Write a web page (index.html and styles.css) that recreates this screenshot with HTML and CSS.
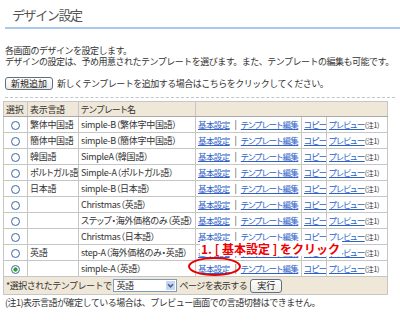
FILE: index.html
```html
<!DOCTYPE html>
<html lang="ja">
<head>
  <meta charset="UTF-8" />
  <title>デザイン設定</title>
  <link rel="stylesheet" href="styles.css">
</head>
<body>

  <!-- Page heading -->
  <h1 class="title">デザイン設定</h1>

  <p class="lead">
    各画面のデザインを設定します。<br>
    デザインの設定は、予め用意されたテンプレートを選びます。また、テンプレートの編集も可能です。
  </p>

  <div class="add-row">
    <button class="btn">新規追加</button>
    <span>新しくテンプレートを追加する場合はこちらをクリックしてください。</span>
  </div>
  <div class="rule"></div>

  <!-- Template list -->
  <div class="table-wrap">
    <table class="tpl">
      <colgroup>
        <col style="width: 24px">
        <col style="width: 51px">
        <col style="width: 117px">
        <col style="width: 106px">
        <col style="width: 25px">
        <col style="width: 61px">
      </colgroup>
      <tr class="head">
        <th>選択</th>
        <th class="lang">表示言語</th>
        <th>テンプレート名</th>
        <th colspan="3"></th>
      </tr>
      <tr>
        <td class="sel"><span class="radio"></span></td>
        <td class="lang">繁体中国語</td>
        <td>simple-B（繁体字中国語）</td>
        <td class="links"><a href="#">基本設定</a><span class="sep">|</span><a href="#">テンプレート編集</a></td>
        <td class="links"><a href="#">コピー</a></td>
        <td class="links"><a href="#">プレビュー</a><span class="note-mark">(注1)</span></td>
      </tr>
      <tr>
        <td class="sel"><span class="radio"></span></td>
        <td class="lang">簡体中国語</td>
        <td>simple-B（簡体字中国語）</td>
        <td class="links"><a href="#">基本設定</a><span class="sep">|</span><a href="#">テンプレート編集</a></td>
        <td class="links"><a href="#">コピー</a></td>
        <td class="links"><a href="#">プレビュー</a><span class="note-mark">(注1)</span></td>
      </tr>
      <tr>
        <td class="sel"><span class="radio"></span></td>
        <td class="lang">韓国語</td>
        <td>SimpleA（韓国語）</td>
        <td class="links"><a href="#">基本設定</a><span class="sep">|</span><a href="#">テンプレート編集</a></td>
        <td class="links"><a href="#">コピー</a></td>
        <td class="links"><a href="#">プレビュー</a><span class="note-mark">(注1)</span></td>
      </tr>
      <tr>
        <td class="sel"><span class="radio"></span></td>
        <td class="lang">ポルトガル語</td>
        <td>Simple-A（ポルトガル語）</td>
        <td class="links"><a href="#">基本設定</a><span class="sep">|</span><a href="#">テンプレート編集</a></td>
        <td class="links"><a href="#">コピー</a></td>
        <td class="links"><a href="#">プレビュー</a><span class="note-mark">(注1)</span></td>
      </tr>
      <tr>
        <td class="sel"><span class="radio"></span></td>
        <td class="lang">日本語</td>
        <td>simple-B（日本語）</td>
        <td class="links"><a href="#">基本設定</a><span class="sep">|</span><a href="#">テンプレート編集</a></td>
        <td class="links"><a href="#">コピー</a></td>
        <td class="links"><a href="#">プレビュー</a><span class="note-mark">(注1)</span></td>
      </tr>
      <tr>
        <td class="sel"><span class="radio"></span></td>
        <td class="lang"></td>
        <td>Christmas（英語）</td>
        <td class="links"><a href="#">基本設定</a><span class="sep">|</span><a href="#">テンプレート編集</a></td>
        <td class="links"><a href="#">コピー</a></td>
        <td class="links"><a href="#">プレビュー</a><span class="note-mark">(注1)</span></td>
      </tr>
      <tr>
        <td class="sel"><span class="radio"></span></td>
        <td class="lang"></td>
        <td>ステップ・海外価格のみ（英語）</td>
        <td class="links"><a href="#">基本設定</a><span class="sep">|</span><a href="#">テンプレート編集</a></td>
        <td class="links"><a href="#">コピー</a></td>
        <td class="links"><a href="#">プレビュー</a><span class="note-mark">(注1)</span></td>
      </tr>
      <tr>
        <td class="sel"><span class="radio"></span></td>
        <td class="lang"></td>
        <td>Christmas（日本語）</td>
        <td class="links"><a href="#">基本設定</a><span class="sep">|</span><a href="#">テンプレート編集</a></td>
        <td class="links"><a href="#">コピー</a></td>
        <td class="links"><a href="#">プレビュー</a><span class="note-mark">(注1)</span></td>
      </tr>
      <tr>
        <td class="sel"><span class="radio"></span></td>
        <td class="lang">英語</td>
        <td>step-A（海外価格のみ・英語）</td>
        <td class="links"><a href="#">基本設定</a><span class="sep">|</span><a href="#">テンプレート編集</a></td>
        <td class="links"><a href="#">コピー</a></td>
        <td class="links"><a href="#">プレビュー</a><span class="note-mark">(注1)</span></td>
      </tr>
      <tr>
        <td class="sel"><span class="radio on"></span></td>
        <td class="lang"></td>
        <td>simple-A（英語）</td>
        <td class="links"><a href="#">基本設定</a><span class="sep">|</span><a href="#">テンプレート編集</a></td>
        <td class="links"><a href="#">コピー</a></td>
        <td class="links"><a href="#">プレビュー</a><span class="note-mark">(注1)</span></td>
      </tr>
      <tr class="foot">
        <td colspan="6">
          <div class="foot-row">
            <span>*選択されたテンプレートで</span>
            <span class="select">
              <span class="select-value">英語</span>
              <span class="select-arrow">
                <svg width="9" height="9" viewBox="0 0 9 9"><path d="M2 3.2 L4.5 5.8 L7 3.2" fill="none" stroke="#4d6185" stroke-width="1.6"/></svg>
              </span>
            </span>
            <span>ページを表示する</span>
            <button class="btn small">実行</button>
          </div>
        </td>
      </tr>
    </table>

    <!-- Annotation -->
    <div class="callout">1. [ 基本設定 ] をクリック</div>
    <div class="ring"></div>
  </div>

  <p class="note">(注1)表示言語が確定している場合は、プレビュー画面での言語切替はできません。</p>

</body>
</html>
```

FILE: styles.css
```css
body {
  margin: 0;
  font-family: "Noto Sans CJK JP", sans-serif;
  font-size: 9px;
  color: #333;
  background: #fff;
}

.title {
  margin: 0 0 0 5px;
  padding: 6px 0 4px 7px;
  font-size: 13px;
  line-height: 17px;
  font-weight: normal;
  letter-spacing: -1.4px;
  color: #555;
  border-bottom: 2px solid #a9c8ea;
}

.lead {
  margin: 16px 0 0 5px;
  line-height: 11px;
  letter-spacing: -0.5px;
}

.add-row {
  display: flex;
  align-items: center;
  gap: 4px;
  margin: 10px 0 0 5px;
  letter-spacing: -0.5px;
}

.btn {
  font-family: inherit;
  font-size: 9px;
  letter-spacing: 0;
  color: #222;
  height: 13px;
  padding: 0 5px;
  line-height: 11px;
  border: 1px solid #5f6f82;
  border-radius: 3px;
  background: linear-gradient(#ffffff, #ecebe5);
}

.rule {
  margin: 7px 5px 0 5px;
  border-top: 1px dashed #c4c4c4;
}

/* Template table */
.table-wrap {
  position: relative;
  margin-top: 3px;
}

.tpl {
  margin-left: 3px;
  width: 384px;
  table-layout: fixed;
  border-collapse: collapse;
  border: 1px solid #9a9a9a;
  font-feature-settings: "palt";
}

.tpl th,
.tpl td {
  border: 1px solid #c6c6c6;
  padding: 0 2px;
  height: 15px;
  line-height: 13px;
  text-align: left;
  font-weight: normal;
  letter-spacing: -0.3px;
  white-space: nowrap;
  overflow: hidden;
}

.tpl .lang {
  padding: 0 0 0 2px;
}

.tpl .head th {
  height: 14px;
  background: #efe7d7;
  border-bottom-color: #a9a9a9;
}

.tpl td.sel {
  text-align: center;
  padding: 0;
}

.radio {
  display: inline-block;
  width: 7px;
  height: 7px;
  border: 1px solid #3f6ea8;
  border-radius: 50%;
  background: radial-gradient(circle, #ffffff 40%, #dfe6ee);
  vertical-align: middle;
}

.radio.on {
  background: radial-gradient(circle, #2f9e2f 0 1.8px, #ffffff 2.4px, #dfe6ee);
}

.tpl td.links {
  padding: 0 0 0 2px;
}

.links a {
  font-size: 8.5px;
  letter-spacing: -0.6px;
  color: #2f62c6;
  text-decoration: underline;
}

.sep {
  margin: 0 4px 0 5px;
  color: #444;
}

.note-mark {
  font-size: 7px;
  color: #333;
}

.tpl .foot td {
  height: 17px;
  background: #efe7d7;
  padding: 0 2px;
  letter-spacing: -0.5px;
  font-feature-settings: normal;
}

.foot-row {
  display: flex;
  align-items: center;
  gap: 2px;
}

.select {
  display: flex;
  width: 62px;
  height: 11px;
  border: 1px solid #7f9db9;
  background: #fff;
}

.select-value {
  flex: 1;
  padding-left: 2px;
  line-height: 11px;
}

.select-arrow {
  width: 9px;
  height: 9px;
  margin: 1px;
  display: flex;
  background: #c6d5f5;
}

.btn.small {
  height: 14px;
  padding: 0 6px;
  margin-left: 1px;
}

/* Red annotation */
.callout {
  position: absolute;
  left: 200px;
  top: 140px;
  padding: 0 2px 0 1px;
  background: #fff;
  color: #ee0000;
  font-size: 12px;
  font-weight: bold;
  line-height: 15px;
}

.ring {
  position: absolute;
  left: 188px;
  top: 156px;
  width: 49px;
  height: 15px;
  border: 2px solid #e60000;
  border-radius: 50%;
}

.note {
  margin: 2px 0 0 5px;
  line-height: 12px;
  letter-spacing: -0.5px;
}
```
